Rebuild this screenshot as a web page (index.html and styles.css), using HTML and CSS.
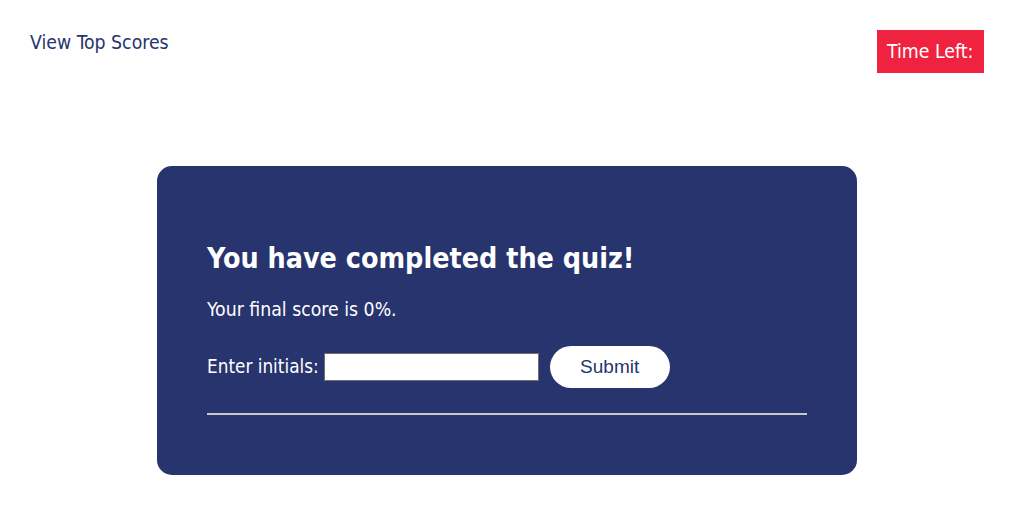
FILE: index.html
```html
<!DOCTYPE html>
<html>
<head>
<meta charset="utf-8">
<link rel="stylesheet" href="styles.css">
</head>
<body>
<header class="top">
  <a class="scores-link" href="#">View Top Scores</a>
  <div class="timer">Time Left:</div>
</header>
<main class="card">
  <h1 class="title">You have completed the quiz!</h1>
  <p class="score">Your final score is 0%.</p>
  <form class="form">
    <label class="label">Enter initials:</label>
    <input class="initials" type="text">
    <button class="submit" type="button">Submit</button>
  </form>
  <hr class="rule">
</main>
</body>
</html>
```
FILE: styles.css
```css
html, body {
  margin: 0;
  padding: 0;
  background: #fff;
}
body {
  font-family: "DejaVu Sans Condensed", "DejaVu Sans", sans-serif;
}
.top {
  display: flex;
  justify-content: space-between;
  align-items: flex-start;
  padding: 31px 28px 0 30px;
  height: 136px;
  box-sizing: border-box;
}
.scores-link {
  color: #27346e;
  text-decoration: none;
  font-size: 19.3px;
  line-height: 24px;
}
.timer {
  background: #ef2340;
  color: #fff;
  font-size: 19.3px;
  line-height: 43px;
  padding: 0 10px;
  width: 107px;
  box-sizing: border-box;
  margin-top: -1px;
}
.card {
  width: 700px;
  height: 309px;
  box-sizing: border-box;
  margin: 30px 0 0 157px;
  background: #27346e;
  border-radius: 15px;
  padding: 75px 50px 0 50px;
  color: #fff;
}
.title {
  margin: 0;
  font-size: 28.4px;
  line-height: 36px;
  font-weight: bold;
}
.score {
  margin: 21px 0 0 0;
  font-size: 19.3px;
  line-height: 24px;
}
.form {
  display: flex;
  align-items: center;
  margin-top: 24px;
}
.label {
  font-size: 18.8px;
  line-height: 24px;
}
.initials {
  width: 215px;
  height: 28px;
  box-sizing: border-box;
  margin: 0 0 0 5px;
  border: 1px solid #6f6f6f;
  background: #fff;
  padding: 0 4px;
}
.submit {
  margin-left: 11px;
  width: 120px;
  height: 42px;
  border: none;
  border-radius: 21px;
  background: #fff;
  color: #27346e;
  font-family: "Liberation Sans", Arial, sans-serif;
  font-size: 19px;
}
.rule {
  margin: 25px 0 0 0;
  border: none;
  height: 2px;
  background: #c8c8c8;
}
```
